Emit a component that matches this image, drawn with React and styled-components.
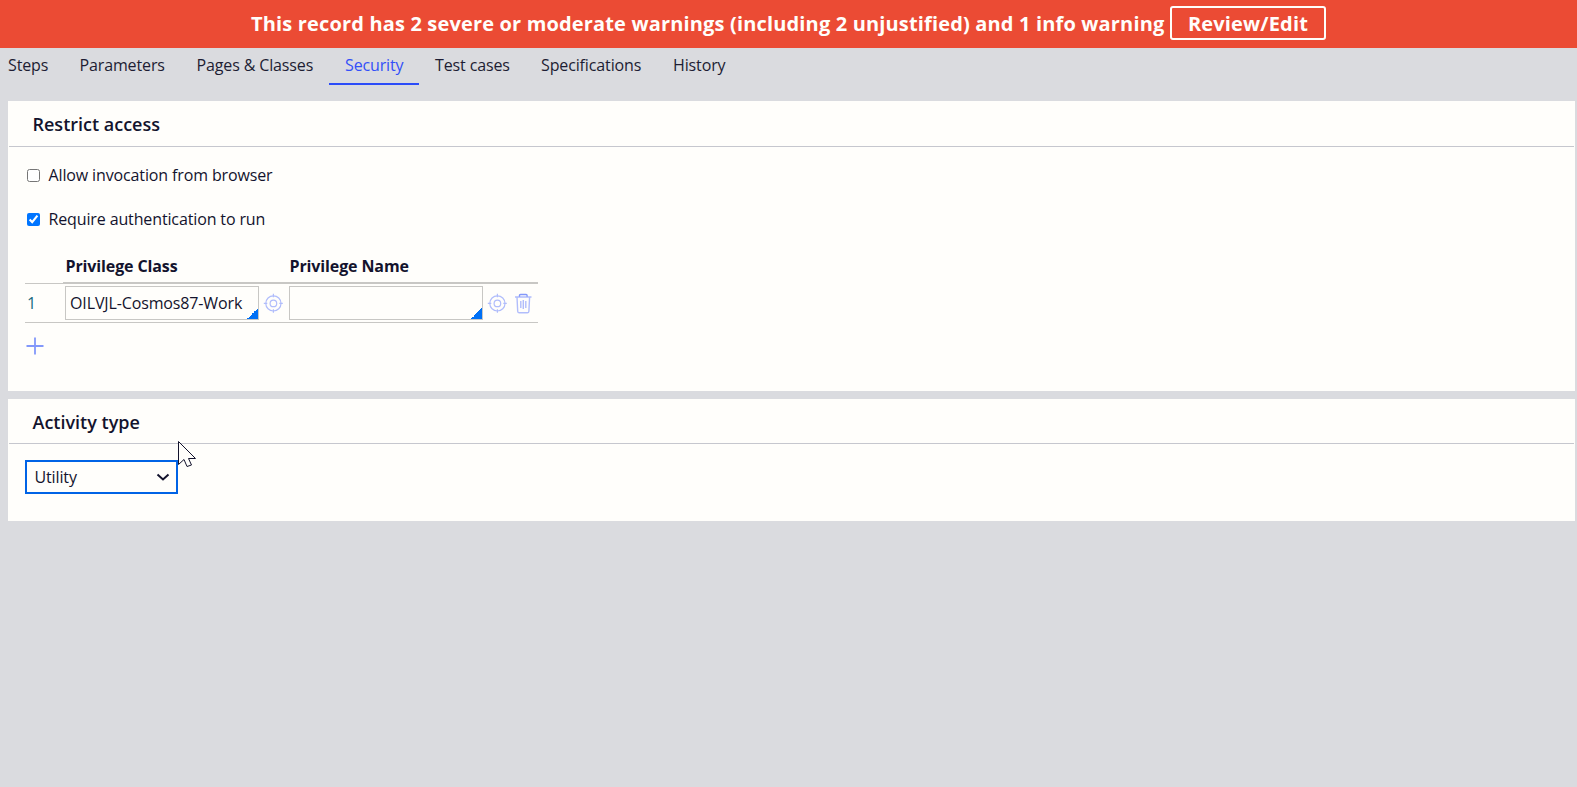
import React from "react";
import styled, { createGlobalStyle } from "styled-components";

const GlobalStyle = createGlobalStyle`
  * { box-sizing: border-box; }
  body {
    margin: 0;
    background: #dadbdf;
    color: #13132d;
    font: 400 16px/22px "Open Sans", "Noto Sans", sans-serif;
    letter-spacing: -0.13px;
  }
  input, button, select { font: inherit; color: inherit; letter-spacing: inherit; }
`;

const Page = styled.div`
  min-height: 787px;
  background: #dadbdf;
`;

const Banner = styled.header`
  height: 48px;
  display: flex;
  align-items: center;
  justify-content: center;
  gap: 6px;
  padding: 0 1px 2px 0;
  background: #eb4b34;
  color: #fffefb;
  font-size: 20px;
  font-weight: 700;
  white-space: nowrap;
  letter-spacing: 0.16px;
`;

const BannerText = styled.span`
  width: 914px;
  padding: 2px 0 0 1px;
`;

const ReviewButton = styled.button`
  width: 156px;
  height: 34px;
  padding: 2px 0 0;
  border: 2px solid #fffefb;
  border-radius: 3px;
  background: transparent;
  line-height: 28px;
  letter-spacing: 0.16px;
`;

const Tabs = styled.nav`
  display: flex;
  height: 37px;
  margin-left: -8px;
`;

const Tab = styled.a`
  width: ${(p) => p.$width}px;
  padding: 6px 0 0 16px;
  white-space: nowrap;
  color: ${(p) => (p.$active ? "#3350f8" : "#1d1d33")};
  border-bottom: 2px solid ${(p) => (p.$active ? "#2b4cf9" : "transparent")};
`;

const Cards = styled.main`
  display: flex;
  flex-direction: column;
  gap: 8px;
  padding: 16px 2px 0 8px;
`;

const Card = styled.section`
  height: ${(p) => p.$height}px;
  padding: 0 1px;
  background: #fffefb;
`;

const CardTitle = styled.h2`
  height: ${(p) => p.$height}px;
  margin: 0;
  padding: 11px 0 0 23.5px;
  border-bottom: 1px solid #c6c7ce;
  font-size: 18px;
  line-height: 25px;
  font-weight: 600;
  letter-spacing: 0;
`;

const CardBody = styled.div`
  padding: 16px;
`;

const CheckRow = styled.label`
  display: flex;
  height: 24px;
  margin-bottom: 20px;
  align-items: center;
  gap: 8.5px;
  padding-left: 2px;
`;

const Checkbox = styled.input`
  width: 13px;
  height: 13px;
  margin: 0;
`;

const Grid = styled.div`
  width: 513px;
  display: grid;
  grid-template-columns: 38px 224px 224px 1fr;
`;

const HeadCell = styled.div`
  height: 33px;
  padding: 4px 0 0 2.5px;
  font-weight: 700;
  letter-spacing: -0.12px;
  border-bottom: 2px solid #c8c7c4;
`;

const IndexHead = styled.div`
  height: 33px;
  border-bottom: 1px solid #c8c7c4;
`;

const Cell = styled.div`
  height: 39px;
  display: flex;
  align-items: center;
  padding-left: 2px;
  border-bottom: 1px solid #c8c7c4;
`;

const IndexCell = styled(Cell)`
  color: #196b80;
`;

const Field = styled.div`
  width: 194px;
  height: 34px;
  padding: 5px 4px 0;
  border: 1px solid #c8c7c4;
  background: linear-gradient(135deg, transparent 50%, #0070f5 50%) right bottom / 11px 11px no-repeat;
  white-space: nowrap;
`;

const IconSlot = styled.span`
  display: flex;
  margin-left: ${(p) => p.$left || 0}px;
`;

const AddButton = styled.button`
  display: flex;
  margin: 14px 0 0 1px;
  padding: 0;
  border: 0;
  background: none;
`;

const SelectBox = styled.div`
  width: 153px;
  height: 34px;
  display: flex;
  align-items: center;
  justify-content: space-between;
  padding: 0 6px 0 7.5px;
  border: 2px solid #0063e6;
`;

const Cursor = styled.svg`
  position: absolute;
  left: 178px;
  top: 440px;
`;

function TargetIcon() {
  return (
    <svg width="20" height="20" viewBox="0 0 20 20" fill="none" stroke="#b1bdfb" strokeWidth="1.2">
      <circle cx="10.4" cy="10.4" r="7.6" />
      <circle cx="10.4" cy="10.4" r="3.3" />
      <path d="M10.4 .8v3.5M10.4 16.3v3.5M.8 10.4h3.5M16.3 10.4h3.5" />
    </svg>
  );
}

function TrashIcon() {
  return (
    <svg width="18" height="21" viewBox="0 0 18 21" fill="none" stroke="#b1bdfb" strokeWidth="1.4">
      <path d="M1 4h16.500M3 4L3.700 18.200Q3.800 19.800 5.300 19.800H13.300Q14.800 19.800 14.900 18.200L15.600 4" />
      <path d="M5.500 3.800V2.500Q5.500 1.500 6.500 1.500h5.600q1 0 1 1v1.300" stroke="#8398fa" />
      <path d="M6.800 8v7M9.300 7v9M11.800 8v7" />
    </svg>
  );
}

const tabs = [
  ["Steps", 71.5],
  ["Parameters", 117],
  ["Pages & Classes", 148.5],
  ["Security", 90],
  ["Test cases", 106],
  ["Specifications", 132],
  ["History", 90],
];

export default function App() {
  return (
    <Page>
      <GlobalStyle />
      <Banner>
        <BannerText>
          This record has 2 severe or moderate warnings (including 2 unjustified) and 1 info warning
        </BannerText>
        <ReviewButton>Review/Edit</ReviewButton>
      </Banner>
      <Tabs>
        {tabs.map(([name, width]) => (
          <Tab key={name} $width={width} $active={name === "Security"}>
            {name}
          </Tab>
        ))}
      </Tabs>
      <Cards>
        <Card $height={290}>
          <CardTitle $height={46}>Restrict access</CardTitle>
          <CardBody>
            <CheckRow>
              <Checkbox type="checkbox" />
              Allow invocation from browser
            </CheckRow>
            <CheckRow>
              <Checkbox type="checkbox" defaultChecked />
              Require authentication to run
            </CheckRow>
            <Grid>
              <IndexHead />
              <HeadCell>Privilege Class</HeadCell>
              <HeadCell>Privilege Name</HeadCell>
              <HeadCell />
              <IndexCell>1</IndexCell>
              <Cell>
                <Field>OILVJL-Cosmos87-Work</Field>
                <IconSlot $left={4}><TargetIcon /></IconSlot>
              </Cell>
              <Cell>
                <Field />
                <IconSlot $left={4}><TargetIcon /></IconSlot>
              </Cell>
              <Cell>
                <IconSlot $left={1}><TrashIcon /></IconSlot>
              </Cell>
            </Grid>
            <AddButton aria-label="Add">
              <svg width="18" height="18" viewBox="0 0 18 18" stroke="#8398fa" strokeWidth="1.8">
                <path d="M9 .5v17M.5 9h17" />
              </svg>
            </AddButton>
          </CardBody>
        </Card>
        <Card $height={122}>
          <CardTitle $height={45}>Activity type</CardTitle>
          <CardBody>
            <SelectBox>
              Utility
              <svg width="14" height="8" viewBox="0 0 14 8" fill="none" stroke="#13132d" strokeWidth="2">
                <path d="M1.5 1.5L7 6.5 12.5 1.5" />
              </svg>
            </SelectBox>
          </CardBody>
        </Card>
      </Cards>
      <Cursor width="20" height="28" viewBox="0 0 20 28" fill="#fffefb" stroke="#13132d">
        <path d="M.5 1.5V24.5L6 19.5 9 26.5 13.5 25 10.500 18.500H17.500Z" />
      </Cursor>
    </Page>
  );
}
